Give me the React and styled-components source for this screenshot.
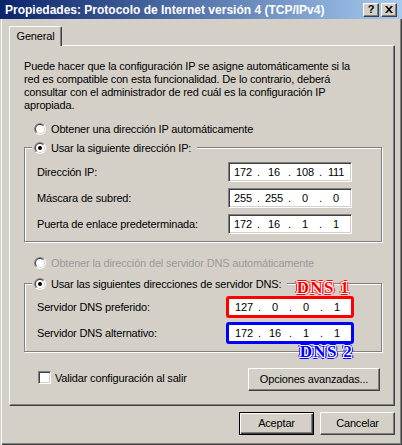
import React from 'react';
import styled, { createGlobalStyle } from 'styled-components';

const Global = createGlobalStyle`
  html, body, #root { margin: 0; padding: 0; }
  body {
    background: #d4d0c8;
    font-family: "Liberation Sans", Arial, sans-serif;
    font-size: 11px;
    letter-spacing: -0.17px;
    color: #000;
  }
  * { box-sizing: border-box; }
`;

const Window = styled.div`
  width: 402px;
  height: 445px;
  overflow: hidden;
  display: flex;
  flex-direction: column;
  background: #d4d0c8;
`;

const TitleBar = styled.div`
  flex: none;
  height: 19px;
  display: flex;
  align-items: center;
  justify-content: space-between;
  padding: 0 5px 0 5px;
  background: linear-gradient(to right, #0a246a, #a6caf0);
  color: #fff;
  font-weight: bold;
  font-size: 12px;
  letter-spacing: 0;
  white-space: nowrap;
`;

const TitleButtons = styled.div`
  display: flex;
  gap: 2px;
`;

const CaptionButton = styled.div`
  width: 16px;
  height: 14px;
  display: flex;
  align-items: center;
  justify-content: center;
  background: #d4d0c8;
  border: 1px solid;
  border-color: #fff #404040 #404040 #fff;
  box-shadow: inset -1px -1px 0 #808080;
  color: #000;
  font-size: 11px;
  font-weight: bold;
  line-height: 1;
  padding-bottom: 1px;
`;

const Body = styled.div`
  flex: 1;
  display: flex;
  flex-direction: column;
  padding: 7px 7px 0 9px;
  box-shadow: inset 1px 0 0 #d4d0c8, inset 2px 0 0 #fff, inset -1px -1px 0 #404040, inset -2px -2px 0 #808080;
`;

const TabStrip = styled.div`
  display: flex;
  height: 19px;
`;

const Tab = styled.div`
  position: relative;
  z-index: 1;
  width: 53px;
  height: 20px;
  display: flex;
  align-items: center;
  justify-content: center;
  padding-bottom: 2px;
  background: #d4d0c8;
  border-top: 1px solid #fff;
  border-left: 1px solid #fff;
  border-right: 1px solid #404040;
  border-radius: 2px 2px 0 0;
  box-shadow: inset -1px 0 0 #808080;
`;

const Panel = styled.div`
  height: 361px;
  display: flex;
  flex-direction: column;
  padding: 14px 12px 0 14px;
  border: 1px solid;
  border-color: #fff #404040 #404040 #fff;
  box-shadow: inset -1px -1px 0 #808080;
`;

const Paragraph = styled.p`
  margin: 0;
  line-height: 13px;
  white-space: nowrap;
`;

const RadioRow = styled.div`
  display: flex;
  align-items: center;
  gap: 5px;
  height: 13px;
  margin-top: ${p => p.$mt}px;
  padding-left: 10px;
  color: ${p => (p.$disabled ? '#9a9a9a' : '#000')};
  white-space: nowrap;
`;

const GroupBox = styled.div`
  display: flex;
  flex-direction: column;
  margin-top: ${p => p.$mt}px;
  padding: 0 29px 7px 12px;
  border: 1px solid #808080;
  box-shadow: inset 1px 1px 0 #fff, 1px 1px 0 #fff;
`;

const Legend = styled.div`
  align-self: flex-start;
  display: flex;
  align-items: center;
  gap: 5px;
  height: 13px;
  margin: -7px 0 0 -5px;
  padding: 0 6px 0 2px;
  background: #d4d0c8;
  white-space: nowrap;
`;

const FieldList = styled.div`
  display: flex;
  flex-direction: column;
  gap: ${p => p.$gap}px;
  margin-top: ${p => p.$mt}px;
`;

const FieldRow = styled.div`
  display: flex;
  align-items: center;
  justify-content: space-between;
  white-space: nowrap;
`;

const IpBox = styled.div`
  width: 124px;
  height: 20px;
  display: flex;
  align-items: center;
  padding: 0 2px;
  background: #fff;
  border: 1px solid;
  border-color: #808080 #fff #fff #808080;
  box-shadow: inset 1px 1px 0 #404040, inset -1px -1px 0 #d4d0c8;
`;

const MarkedBox = styled.div`
  position: relative;
  width: 128px;
  height: 22px;
  margin-right: -2px;
  display: flex;
  align-items: center;
  padding: 0 2px 0 3px;
  background: #fff;
  border: 3px solid ${p => p.$color};
  border-radius: 3px;
`;

const Seg = styled.span`
  width: 24px;
  text-align: center;
`;

const Dot = styled.span`
  width: 7px;
  text-align: center;
`;

const Tag = styled.span`
  position: absolute;
  right: ${p => p.$right}px;
  ${p => (p.$below ? 'bottom: -19px;' : 'top: -20px;')}
  font-family: "Liberation Serif", "Times New Roman", serif;
  font-weight: bold;
  font-size: 17px;
  letter-spacing: 1.3px;
  line-height: 17px;
  color: ${p => p.$color};
  text-shadow:
    1px 0 0 #fff, -1px 0 0 #fff, 0 1px 0 #fff, 0 -1px 0 #fff,
    1px 1px 0 #fff, -1px -1px 0 #fff, 1px -1px 0 #fff, -1px 1px 0 #fff,
    2px 0 0 ${p => p.$color}, -2px 0 0 ${p => p.$color}, 0 2px 0 ${p => p.$color}, 0 -2px 0 ${p => p.$color},
    2px 1px 0 ${p => p.$color}, -2px -1px 0 ${p => p.$color}, 1px -2px 0 ${p => p.$color}, -1px 2px 0 ${p => p.$color};
  white-space: nowrap;
`;

const BottomRow = styled.div`
  display: flex;
  align-items: flex-start;
  justify-content: space-between;
  margin-top: 16px;
  padding: 0 2px 0 14px;
`;

const CheckLabel = styled.label`
  display: flex;
  align-items: center;
  gap: 4px;
  margin-top: 3px;
  height: 13px;
  white-space: nowrap;
`;

const CheckBox = styled.span`
  width: 13px;
  height: 13px;
  background: #fff;
  border: 1px solid;
  border-color: #808080 #fff #fff #808080;
  box-shadow: inset 1px 1px 0 #404040, inset -1px -1px 0 #d4d0c8;
`;

const Button = styled.button`
  width: ${p => p.$w}px;
  height: 23px;
  padding: 0 0 1px;
  margin: 0;
  font: inherit;
  letter-spacing: inherit;
  color: #000;
  background: #d4d0c8;
  border: 1px solid;
  border-color: ${p => (p.$default ? '#000' : '#fff #404040 #404040 #fff')};
  box-shadow: ${p =>
    p.$default
      ? 'inset 1px 1px 0 #fff, inset -1px -1px 0 #404040, inset -2px -2px 0 #808080'
      : 'inset -1px -1px 0 #808080'};
  white-space: nowrap;
`;

const Footer = styled.div`
  display: flex;
  justify-content: flex-end;
  gap: 6px;
  margin-top: 6px;
`;

const RadioSvg = styled.svg`
  flex: none;
  display: block;
`;

const Radio = ({ checked, disabled }) => (
  <RadioSvg width="12" height="12" viewBox="0 0 12 12">
    <circle cx="6" cy="6" r="6" fill="#fff" />
    <path d="M1.757 10.243A6 6 0 0 1 10.243 1.757Z" fill="#808080" />
    <circle cx="6" cy="6" r="5" fill="#d4d0c8" />
    <path d="M2.464 9.536A5 5 0 0 1 9.536 2.464Z" fill="#404040" />
    <circle cx="6" cy="6" r="4" fill="#fff" />
    {checked && <circle cx="6" cy="6" r="2" fill={disabled ? '#808080' : '#000'} />}
  </RadioSvg>
);

const IpText = ({ parts }) => (
  <>
    {parts.map((p, i) => (
      <React.Fragment key={i}>
        {i > 0 && <Dot>.</Dot>}
        <Seg>{p}</Seg>
      </React.Fragment>
    ))}
  </>
);

const CloseGlyph = () => (
  <svg width="8" height="7" viewBox="0 0 8 7">
    <path d="M0 0h2l2 2.3L6 0h2L5 3.5 8 7H6L4 4.7 2 7H0l3-3.5z" fill="#000" />
  </svg>
);

const ipRows = [
  { label: 'Dirección IP:', parts: ['172', '16', '108', '111'] },
  { label: 'Máscara de subred:', parts: ['255', '255', '0', '0'] },
  { label: 'Puerta de enlace predeterminada:', parts: ['172', '16', '1', '1'] },
];

const dnsRows = [
  { label: 'Servidor DNS preferido:', parts: ['127', '0', '0', '1'], color: '#ff0000', tag: 'DNS 1', below: false, right: 1 },
  { label: 'Servidor DNS alternativo:', parts: ['172', '16', '1', '1'], color: '#0000ff', tag: 'DNS 2', below: true, right: -2 },
];

export default function App() {
  return (
    <>
      <Global />
      <Window>
        <TitleBar>
          <span>Propiedades: Protocolo de Internet versión 4 (TCP/IPv4)</span>
          <TitleButtons>
            <CaptionButton>?</CaptionButton>
            <CaptionButton><CloseGlyph /></CaptionButton>
          </TitleButtons>
        </TitleBar>
        <Body>
          <TabStrip>
            <Tab>General</Tab>
          </TabStrip>
          <Panel>
            <Paragraph>
              Puede hacer que la configuración IP se asigne automáticamente si la<br />
              red es compatible con esta funcionalidad. De lo contrario, deberá<br />
              consultar con el administrador de red cuál es la configuración IP<br />
              apropiada.
            </Paragraph>
            <RadioRow $mt={10}>
              <Radio />
              <span>Obtener una dirección IP automáticamente</span>
            </RadioRow>
            <GroupBox $mt={12}>
              <Legend>
                <Radio checked />
                <span>Usar la siguiente dirección IP:</span>
              </Legend>
              <FieldList $gap={6} $mt={8}>
                {ipRows.map(r => (
                  <FieldRow key={r.label}>
                    <span>{r.label}</span>
                    <IpBox><IpText parts={r.parts} /></IpBox>
                  </FieldRow>
                ))}
              </FieldList>
            </GroupBox>
            <RadioRow $mt={14} $disabled>
              <Radio disabled />
              <span>Obtener la dirección del servidor DNS automáticamente</span>
            </RadioRow>
            <GroupBox $mt={14}>
              <Legend>
                <Radio checked />
                <span>Usar las siguientes direcciones de servidor DNS:</span>
              </Legend>
              <FieldList $gap={4} $mt={6}>
                {dnsRows.map(r => (
                  <FieldRow key={r.label}>
                    <span>{r.label}</span>
                    <MarkedBox $color={r.color}>
                      <IpText parts={r.parts} />
                      <Tag $color={r.color} $below={r.below} $right={r.right}>{r.tag}</Tag>
                    </MarkedBox>
                  </FieldRow>
                ))}
              </FieldList>
            </GroupBox>
            <BottomRow>
              <CheckLabel>
                <CheckBox />
                <span>Validar configuración al salir</span>
              </CheckLabel>
              <Button $w={132}>Opciones avanzadas...</Button>
            </BottomRow>
          </Panel>
          <Footer>
            <Button $w={75} $default>Aceptar</Button>
            <Button $w={75}>Cancelar</Button>
          </Footer>
        </Body>
      </Window>
    </>
  );
}
